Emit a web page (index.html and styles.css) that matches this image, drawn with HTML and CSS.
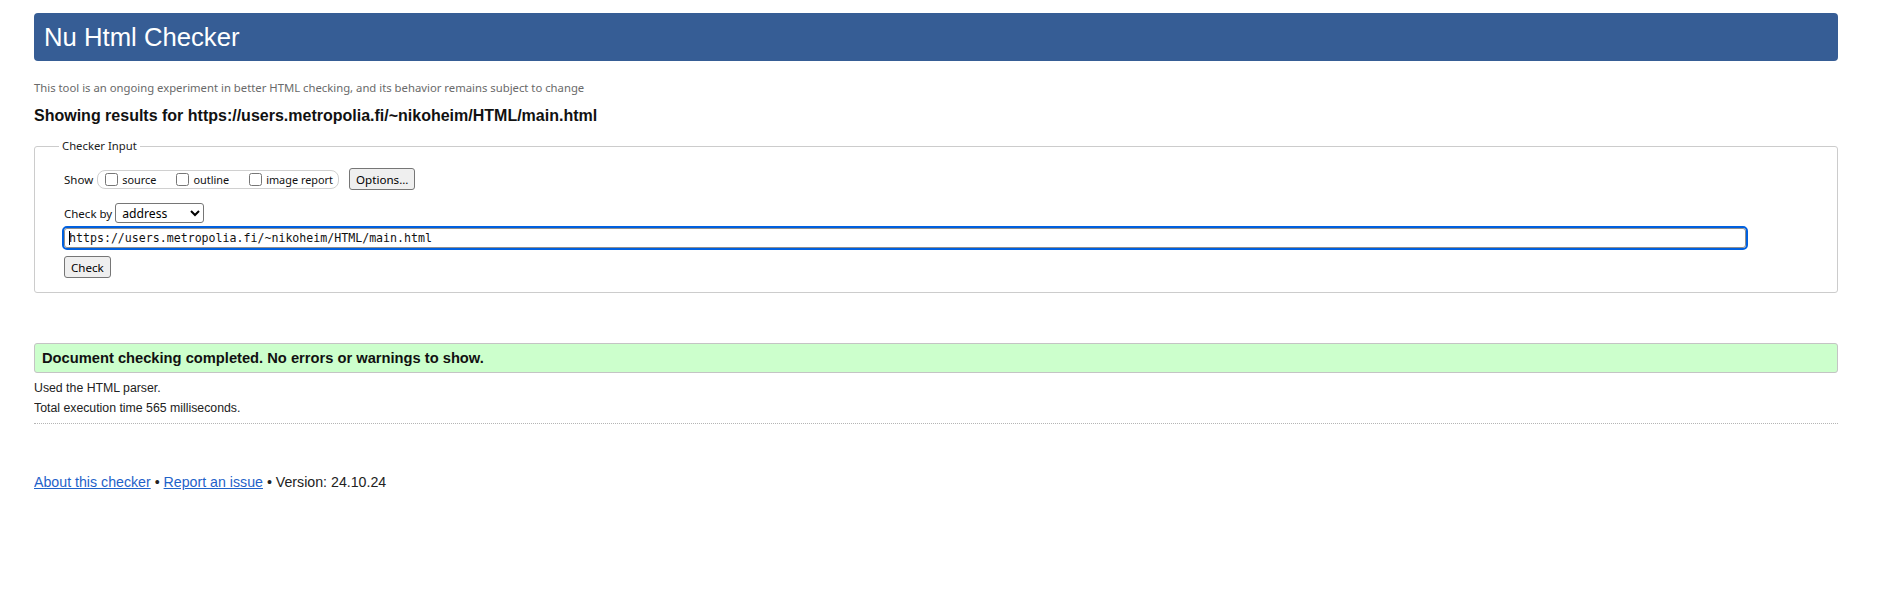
FILE: index.html
```html
<!DOCTYPE html>
<html lang="en">
<head>
<meta charset="utf-8">
<title>Showing results for https://users.metropolia.fi/~nikoheim/HTML/main.html - Nu Html Checker</title>
<link rel="stylesheet" href="styles.css">
</head>
<body>
<h1 class="title">Nu Html Checker</h1>
<p class="subtitle">This tool is an ongoing experiment in better HTML checking, and its behavior remains subject to change</p>
<h2 class="showing">Showing results for https://users.metropolia.fi/~nikoheim/HTML/main.html</h2>

<form class="checker-form">
  <fieldset class="checker-input">
    <legend class="legend">Checker Input</legend>
    <div class="row row-show">
      <span class="row-label">Show</span>
      <span class="show-group">
        <label class="opt"><input type="checkbox" class="cb"><span>source</span></label>
        <label class="opt"><input type="checkbox" class="cb"><span>outline</span></label>
        <label class="opt"><input type="checkbox" class="cb"><span>image report</span></label>
      </span>
      <button type="button" class="btn btn-options">Options...</button>
    </div>
    <div class="row row-by">
      <span class="row-label">Check by</span>
      <select class="select">
        <option>address</option>
        <option>file upload</option>
        <option>text input</option>
      </select>
    </div>
    <div class="url-wrap">
      <input type="url" class="url" value="https://users.metropolia.fi/~nikoheim/HTML/main.html">
      <span class="caret"></span>
    </div>
    <div class="row row-check">
      <button type="button" class="btn btn-check">Check</button>
    </div>
  </fieldset>
</form>

<p class="success">Document checking completed. No errors or warnings to show.</p>
<div class="details">
  <p class="detail">Used the HTML parser.</p>
  <p class="detail">Total execution time 565 milliseconds.</p>
</div>
<hr class="sep">
<p class="footer"><a href="#" class="link">About this checker</a> • <a href="#" class="link">Report an issue</a> • Version: 24.10.24</p>
</body>
</html>
```

FILE: styles.css
```css
html {
  background: #fff;
}
body {
  margin: 0 48px 0 34px;
  font-family: "Liberation Sans", Arial, sans-serif;
  color: #1a1a1a;
}
.title {
  margin: 13px 0 0;
  height: 48px;
  box-sizing: border-box;
  padding: 0 10px;
  display: flex;
  align-items: center;
  background: #365d95;
  color: #fff;
  font-size: 25.7px;
  font-weight: normal;
  border-radius: 4px;
}
.subtitle {
  margin: 20px 0 0;
  font-family: "Noto Sans", "Open Sans", sans-serif;
  font-size: 11.3px;
  line-height: 14px;
  color: #6a6a6a;
}
.showing {
  margin: 11px 0 0;
  font-size: 16px;
  line-height: 19px;
  font-weight: bold;
  color: #111;
}
.checker-form {
  margin: 14px 0 0;
}
.checker-input {
  margin: 0;
  padding: 15px 29px 14px 29px;
  border: 1px solid #cccccc;
  border-radius: 3px;
  font-family: "Noto Sans", "Open Sans", sans-serif;
  color: #1a1a1a;
}
.legend {
  padding: 0 3px;
  margin-left: -5px;
  font-size: 11.3px;
  line-height: 14px;
  color: #222;
}
.row {
  display: flex;
  align-items: center;
}
.row-show {
  height: 22px;
}
.row-label {
  font-size: 11.5px;
  color: #111;
}
.row-show .row-label {
  margin-right: 4px;
}
.show-group {
  display: inline-flex;
  align-items: center;
  gap: 20px;
  height: 19px;
  box-sizing: border-box;
  padding: 0 5px 0 7px;
  border: 1px solid #d0d0d0;
  border-radius: 8px;
}
.opt {
  display: inline-flex;
  align-items: center;
  gap: 4px;
  font-size: 10.9px;
  color: #111;
}
.cb {
  margin: 0;
  width: 13px;
  height: 13px;
}
.btn {
  font-family: "Noto Sans", "Open Sans", sans-serif;
  font-size: 11.6px;
  height: 22px;
  box-sizing: border-box;
  padding: 0 6px;
  border: 1px solid #767676;
  border-radius: 3px;
  background: #efefef;
  color: #000;
}
.btn-options {
  margin-left: 10px;
}
.row-by {
  margin-top: 13px;
  height: 20px;
}
.row-by .row-label {
  margin-right: 3px;
}
.select {
  width: 89px;
  height: 20px;
  box-sizing: border-box;
  font-family: "Noto Sans", "Open Sans", sans-serif;
  font-size: 12.2px;
  padding: 0 0 0 2px;
  border: 1px solid #767676;
  border-radius: 3px;
  background: #fff;
  color: #000;
}
.url-wrap {
  position: relative;
  margin-top: 5px;
  width: 1682px;
  height: 20px;
}
.url {
  display: block;
  width: 1682px;
  height: 20px;
  box-sizing: border-box;
  margin: 0;
  padding: 0 4px;
  border: 1px solid #8f8f8f;
  border-radius: 3px;
  outline: 2px solid #0060df;
  outline-offset: 0;
  font-family: "DejaVu Sans Mono", "Liberation Mono", monospace;
  font-size: 11.6px;
  color: #111;
  background: #fff;
}
.caret {
  position: absolute;
  left: 5px;
  top: 3px;
  width: 1px;
  height: 14px;
  background: #000;
}
.row-check {
  margin-top: 8px;
}
.success {
  margin: 50px 0 0;
  height: 30px;
  box-sizing: border-box;
  padding: 0 7px;
  display: flex;
  align-items: center;
  background: #ccffcc;
  border: 1px solid #c4c4c4;
  border-radius: 3px;
  font-size: 14.7px;
  font-weight: bold;
  color: #111;
}
.details {
  margin-top: 8px;
  display: flex;
  flex-direction: column;
  gap: 5px;
}
.detail {
  margin: 0;
  font-size: 12.3px;
  line-height: 15px;
  color: #222;
}
.sep {
  margin: 7px 0 0;
  border: 0;
  border-top: 1px dotted #b5b5b5;
  height: 0;
}
.footer {
  margin: 50px 0 0;
  font-size: 14.2px;
  line-height: 16px;
  color: #222;
}
.link {
  color: #1f62c9;
  text-decoration: underline;
}
```
